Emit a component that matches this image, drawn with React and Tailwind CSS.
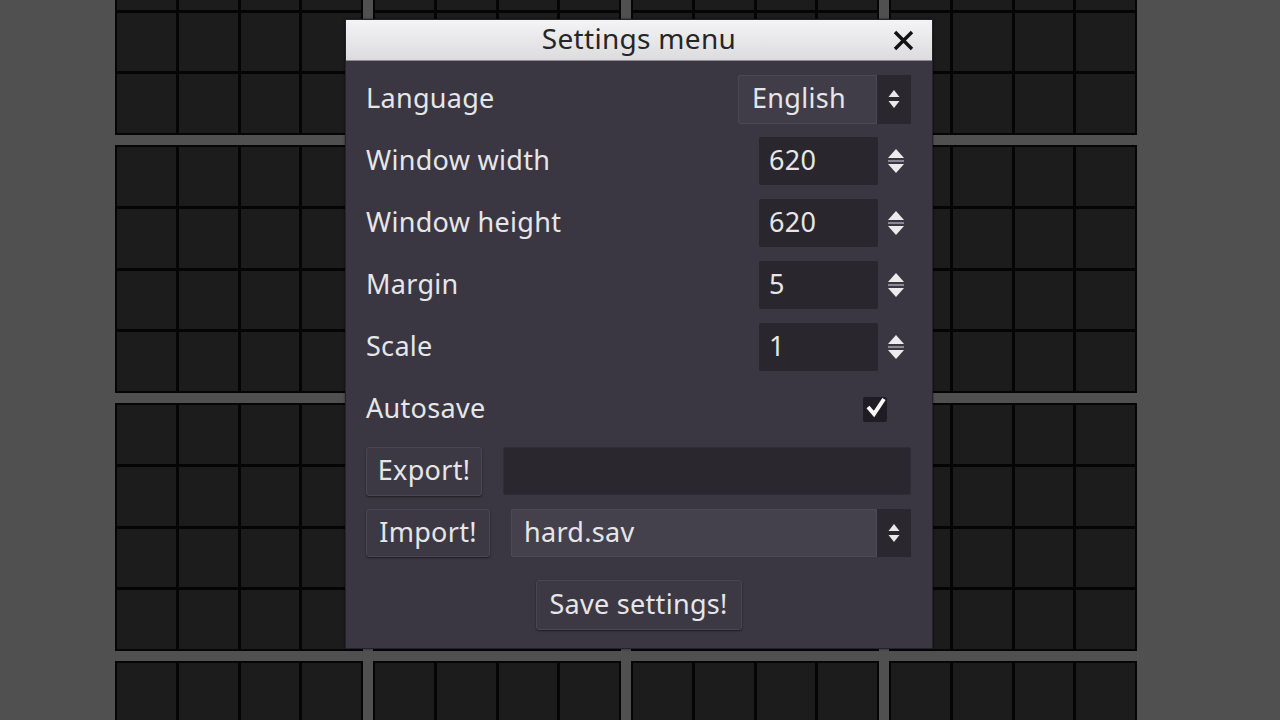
import React from "react";

const font = { fontFamily: '"Noto Sans", "Open Sans", sans-serif' };

function Block() {
  return (
    <div className="w-[248px] h-[248px] bg-[#050505] p-[2px] grid grid-cols-4 grid-rows-4 gap-[3px]">
      {Array.from({ length: 16 }).map((_, i) => (
        <div key={i} className="bg-[#1c1c1c]" />
      ))}
    </div>
  );
}

function Arrows() {
  return (
    <svg width="18" height="28" viewBox="0 0 18 28">
      <path d="M9 2 L17 11 L1 11 Z" fill="#ececec" />
      <rect x="1" y="13" width="16" height="2" fill="#8a8890" />
      <path d="M1 17 L17 17 L9 26 Z" fill="#ececec" />
    </svg>
  );
}

function SmallArrows() {
  return (
    <svg width="14" height="22" viewBox="0 0 14 22">
      <path d="M7 2 L12.5 9 L1.5 9 Z" fill="#e8e8e8" />
      <path d="M1.5 13 L12.5 13 L7 20 Z" fill="#e8e8e8" />
    </svg>
  );
}

const txt = "text-[27px] tracking-[0.3px] leading-none text-[#e6e6e8] pb-[4px]";

function SpinRow({ label, value }) {
  return (
    <div className="flex items-center h-[48px]">
      <span className={"flex-1 " + txt}>{label}</span>
      <div className={"w-[119px] h-[48px] bg-[#29262e] rounded-[2px] flex items-center pl-[10px] " + txt}>
        {value}
      </div>
      <div className="w-[33px] flex items-center justify-center pl-[2px]">
        <Arrows />
      </div>
    </div>
  );
}

export default function App() {
  return (
    <div
      className="relative w-[1280px] h-[720px] overflow-hidden bg-[#505050]"
      style={font}
    >
      <div className="ml-[115px] mt-[-113px] flex flex-col gap-[10px]">
        {[0, 1, 2, 3].map((r) => (
          <div key={r} className="flex gap-[10px]">
            {[0, 1, 2, 3].map((c) => (
              <Block key={c} />
            ))}
          </div>
        ))}
      </div>

      <div className="absolute left-[345px] top-[19px] w-[588px] h-[630px] bg-[#3a3742] border border-[#24222a] flex flex-col shadow-[0_0_2px_rgba(0,0,0,0.6)]">
        <div className="relative h-[41px] bg-gradient-to-b from-[#f4f4f6] to-[#dcdcde] border-b border-[#8d8c92] flex items-center justify-center">
          <span className="text-[28px] tracking-[0.3px] text-[#262626] leading-none mt-[-4px]">Settings menu</span>
          <svg
            className="absolute right-[17px] top-[9px]"
            width="23"
            height="23"
            viewBox="0 0 23 23"
          >
            <path d="M3 3 L20 20 M20 3 L3 20" stroke="#111" strokeWidth="3.4" strokeLinecap="butt" />
          </svg>
        </div>

        <div className="flex flex-col pl-[20px] pr-[21px] pt-[14px] gap-[14px]">
          <div className="flex items-center h-[48px]">
            <span className={"flex-1 " + txt}>Language</span>
            <div className="flex h-[49px]">
              <div className={"w-[139px] bg-[#403d48] border border-[#4b4853] rounded-l-[2px] flex items-center pl-[13px] " + txt}>
                English
              </div>
              <div className="w-[34px] bg-[#2a272f] flex items-center justify-center">
                <SmallArrows />
              </div>
            </div>
          </div>

          <SpinRow label="Window width" value="620" />
          <SpinRow label="Window height" value="620" />
          <SpinRow label="Margin" value="5" />
          <SpinRow label="Scale" value="1" />

          <div className="flex items-center h-[48px]">
            <span className={"flex-1 " + txt}>Autosave</span>
            <div className="relative w-[24px] h-[25px] bg-[#1f1d23] rounded-[2px] mr-[24px]">
              <svg className="absolute left-[1px] top-[-3px]" width="24" height="26" viewBox="0 0 24 26">
                <path d="M4 13 L10 20 L20 5" stroke="#fafafa" strokeWidth="4" fill="none" strokeLinejoin="miter" />
              </svg>
            </div>
          </div>

          <div className="flex items-center h-[48px] gap-[21px]">
            <div className={"w-[116px] h-[49px] bg-[#3c3944] border border-[#4a4753] rounded-[3px] shadow-[0_1px_2px_rgba(0,0,0,0.5)] flex items-center justify-center " + txt}>
              Export!
            </div>
            <div className="flex-1 h-[48px] bg-[#2a272f] border border-[#302d36] rounded-[2px]" />
          </div>

          <div className="flex items-center h-[48px] gap-[21px]">
            <div className={"w-[124px] h-[48px] bg-[#3c3944] border border-[#4a4753] rounded-[3px] shadow-[0_1px_2px_rgba(0,0,0,0.5)] flex items-center justify-center " + txt}>
              Import!
            </div>
            <div className="flex-1 flex h-[48px]">
              <div className={"flex-1 bg-[#44414c] border border-[#4d4a55] rounded-l-[2px] flex items-center pl-[12px] " + txt}>
                hard.sav
              </div>
              <div className="w-[34px] bg-[#2a272f] flex items-center justify-center">
                <SmallArrows />
              </div>
            </div>
          </div>

          <div className="flex justify-center mt-[9px]">
            <div className={"w-[206px] h-[50px] bg-[#3c3944] border border-[#4a4753] rounded-[3px] shadow-[0_1px_2px_rgba(0,0,0,0.5)] flex items-center justify-center " + txt + " text-[#d8d8da]"}>
              Save settings!
            </div>
          </div>
        </div>
      </div>
    </div>
  );
}
